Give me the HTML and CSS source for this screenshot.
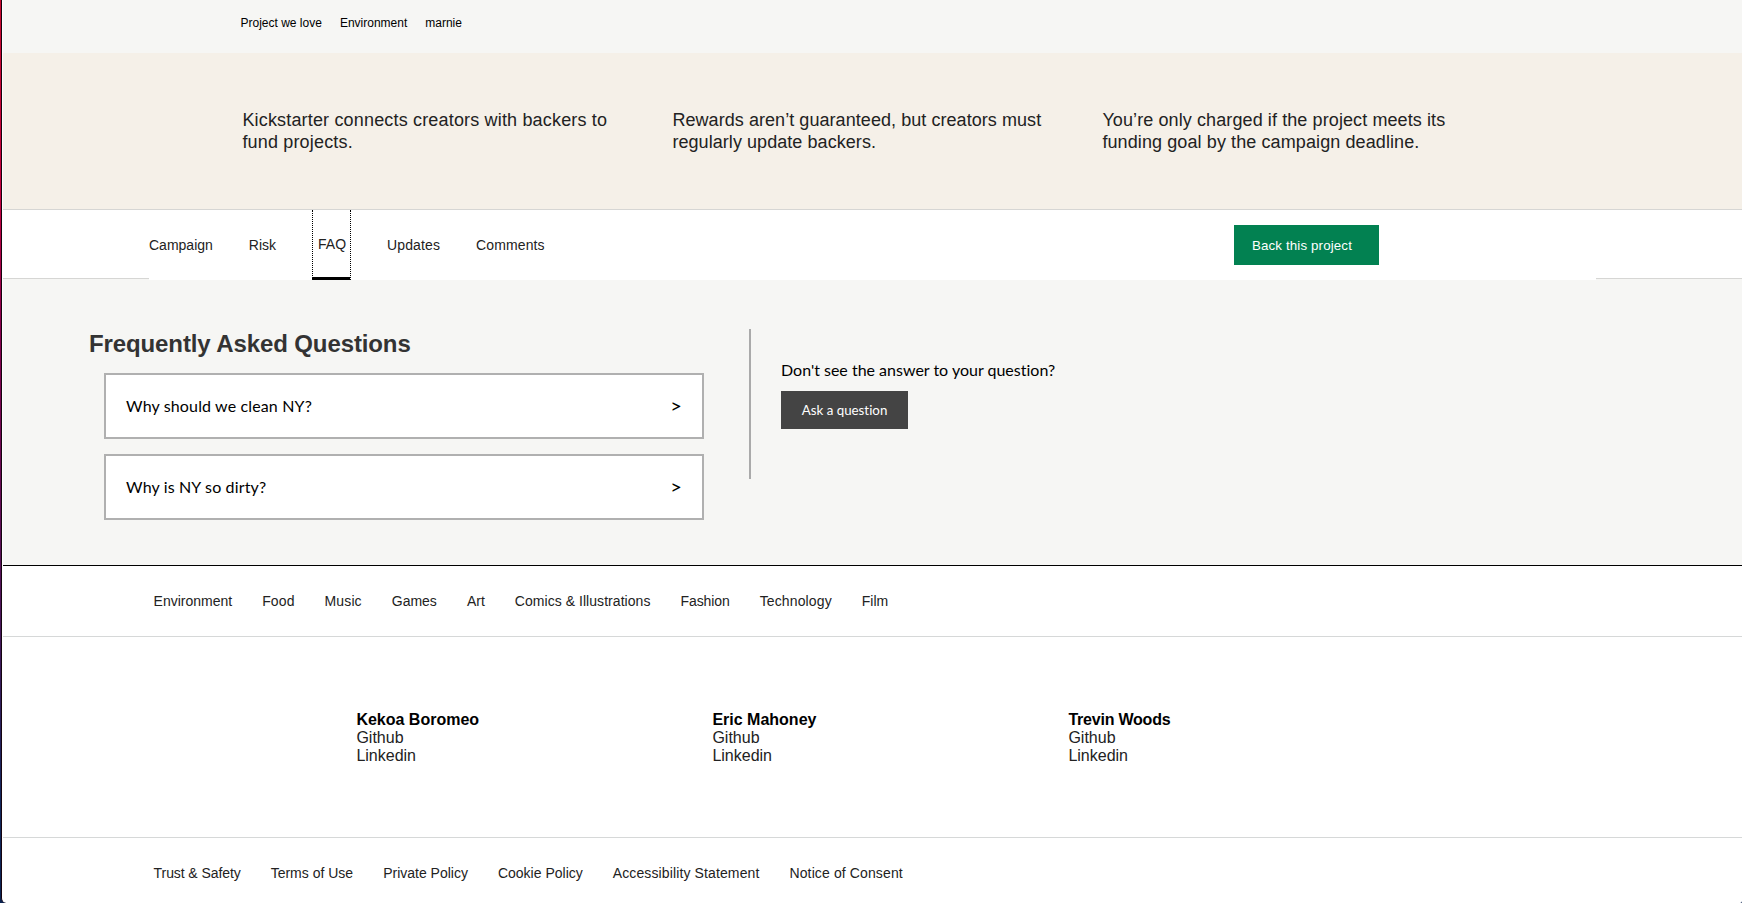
FILE: index.html
```html
<!DOCTYPE html>
<html lang="en">
<head>
<meta charset="utf-8">
<title>Kickstarter project</title>
<link rel="stylesheet" href="styles.css">
</head>
<body>
<div class="page">
  <section class="tags"><span>Project we love</span><span>Environment</span><span>marnie</span></section>
  <section class="promises">
    <p class="connects">Kickstarter connects creators with backers to<br>fund projects.</p>
    <p class="rewards">Rewards aren’t guaranteed, but creators must<br>regularly update backers.</p>
    <p class="charged">You’re only charged if the project meets its<br>funding goal by the campaign deadline.</p>
  </section>
  <nav class="tabs">
    <div class="tabs-inner">
      <a>Campaign</a><a>Risk</a><a class="active">FAQ</a><a class="wide">Updates</a><a class="wide">Comments</a>
      <button class="back">Back this project</button>
    </div>
  </nav>
  <main class="faq">
    <div class="questions">
      <h2>Frequently Asked Questions</h2>
      <div class="card"><span>Why should we clean NY?</span><span class="arrow">&gt;</span></div>
      <div class="card"><span>Why is NY so dirty?</span><span class="arrow">&gt;</span></div>
    </div>
    <aside class="ask">
      <p>Don't see the answer to your question?</p>
      <button class="ask-button">Ask a question</button>
    </aside>
  </main>
  <footer>
    <nav class="links categories"><a>Environment</a><a class="wide">Food</a><a class="wide">Music</a><a>Games</a><a>Art</a><a class="slightly-wide">Comics &amp; Illustrations</a><a class="tight">Fashion</a><a class="wide">Technology</a><a>Film</a></nav>
    <div class="people">
      <div><b>Kekoa Boromeo</b><a>Github</a><a>Linkedin</a></div>
      <div><b>Eric Mahoney</b><a>Github</a><a>Linkedin</a></div>
      <div><b class="tighter">Trevin Woods</b><a>Github</a><a>Linkedin</a></div>
    </div>
    <nav class="links legal"><a class="tight">Trust &amp; Safety</a><a>Terms of Use</a><a>Private Policy</a><a>Cookie Policy</a><a class="wide">Accessibility Statement</a><a class="wide">Notice of Consent</a></nav>
  </footer>
</div>
</body>
</html>
```
FILE: styles.css
```css
* { box-sizing: border-box; }
html { height: 100%; background: linear-gradient(#c9082f 0, #c4003f 200px, #86004d 330px, #4e1458 600px, #12265a 800px, #0b2250 903px); }
body {
  margin: 0;
  height: 903px;
  overflow: hidden;
  padding-left: 1px;
  font-family: "Liberation Sans", Arial, sans-serif;
  color: #222;
}
.page {
  height: 903px;
  border-left: 1px solid #14040f;
  border-bottom-left-radius: 5px;
  border-bottom-right-radius: 2px;
  background: #fff;
  padding-left: 1px;
  overflow: hidden;
}
.wide { letter-spacing: 0.12px; }
.slightly-wide { letter-spacing: 0.05px; }
.tight { letter-spacing: -0.08px; }
.tighter { letter-spacing: -0.22px; }
.tags {
  height: 53px;
  background: #f6f6f4;
  padding: 16px 0 0 237.5px;
  display: flex;
  gap: 18px;
  font-size: 12px;
  line-height: 14px;
  color: #000;
}
.promises {
  height: 157px;
  background: #f5f0e8;
  border-bottom: 1px solid #d6d6d4;
  padding: 56px 0 0 239.4px;
  display: grid;
  grid-template-columns: 430px 430px 430px;
  font-size: 18px;
  line-height: 22px;
  white-space: nowrap;
}
.promises p { margin: 0; }
.connects { letter-spacing: 0.17px; }
.rewards { letter-spacing: 0.06px; }
.charged { letter-spacing: 0.1px; }
.tabs {
  height: 69px;
  border-bottom: 1px solid #d6d6d4;
  padding: 0 146px;
}
.tabs-inner {
  position: relative;
  height: 70px;
  background: #fff;
  display: flex;
  font-size: 14px;
  line-height: 70px;
  gap: 36px;
}
.tabs-inner .active {
  width: 39px;
  border: 1px dotted #000;
  border-top: 0;
  border-bottom: 3px solid #000;
  line-height: 68px;
  padding-left: 1px;
  text-align: center;
}
.back {
  width: 145px;
  height: 40px;
  margin: 15px 217px 0 auto;
  padding: 1px 0 0 18px;
  border: 0;
  background: #028151;
  color: #fff;
  font: 13.333px "Liberation Sans", Arial, sans-serif;
  letter-spacing: 0.13px;
  text-align: left;
  white-space: nowrap;
}
.faq {
  height: 287px;
  background: #f6f6f4;
  border-bottom: 1px solid #000;
  display: flex;
  padding: 50px 0 0 87px;
}
.questions { width: 659px; }
.questions h2 {
  margin: 0 0 15px -1px;
  height: 29px;
  font-size: 24px;
  line-height: 30px;
  letter-spacing: -0.11px;
  color: #333;
}
.card {
  width: 600px;
  height: 66px;
  margin: 0 0 15px 14px;
  padding: 0 20px 2px;
  border: 2px solid #b0b0b0;
  background: #fff;
  display: flex;
  justify-content: space-between;
  align-items: center;
  color: #000;
  font: 16px Lato, "Open Sans", sans-serif;
  letter-spacing: 0.14px;
}
.arrow { font-size: 20px; line-height: 20px; }
.ask {
  height: 150px;
  border-left: 2px solid #aaa;
  padding: 30px 0 0 30px;
  font-family: Lato, "Open Sans", sans-serif;
  font-variant-ligatures: none;
}
.ask p { margin: 0 0 10px; font-size: 16px; line-height: 22px; color: #000; }
.ask-button {
  display: block;
  width: 127px;
  height: 38px;
  padding: 0;
  border: 0;
  background: #444;
  color: #fff;
  font: 13.333px Lato, "Open Sans", sans-serif;
  font-variant-ligatures: none;
}
.links { display: flex; gap: 30px; padding-left: 150.6px; font-size: 14px; }
.categories { height: 71px; line-height: 70px; border-bottom: 1px solid #d6d8d8; }
.people {
  height: 201px;
  border-bottom: 1px solid #d6d8d8;
  padding: 74px 0 0 353.4px;
  display: grid;
  grid-template-columns: 356px 356px 356px;
  font-size: 16px;
  line-height: 18px;
}
.people b { color: #000; }
.people a, .people b { display: block; }
.legal { line-height: 70px; }
```
